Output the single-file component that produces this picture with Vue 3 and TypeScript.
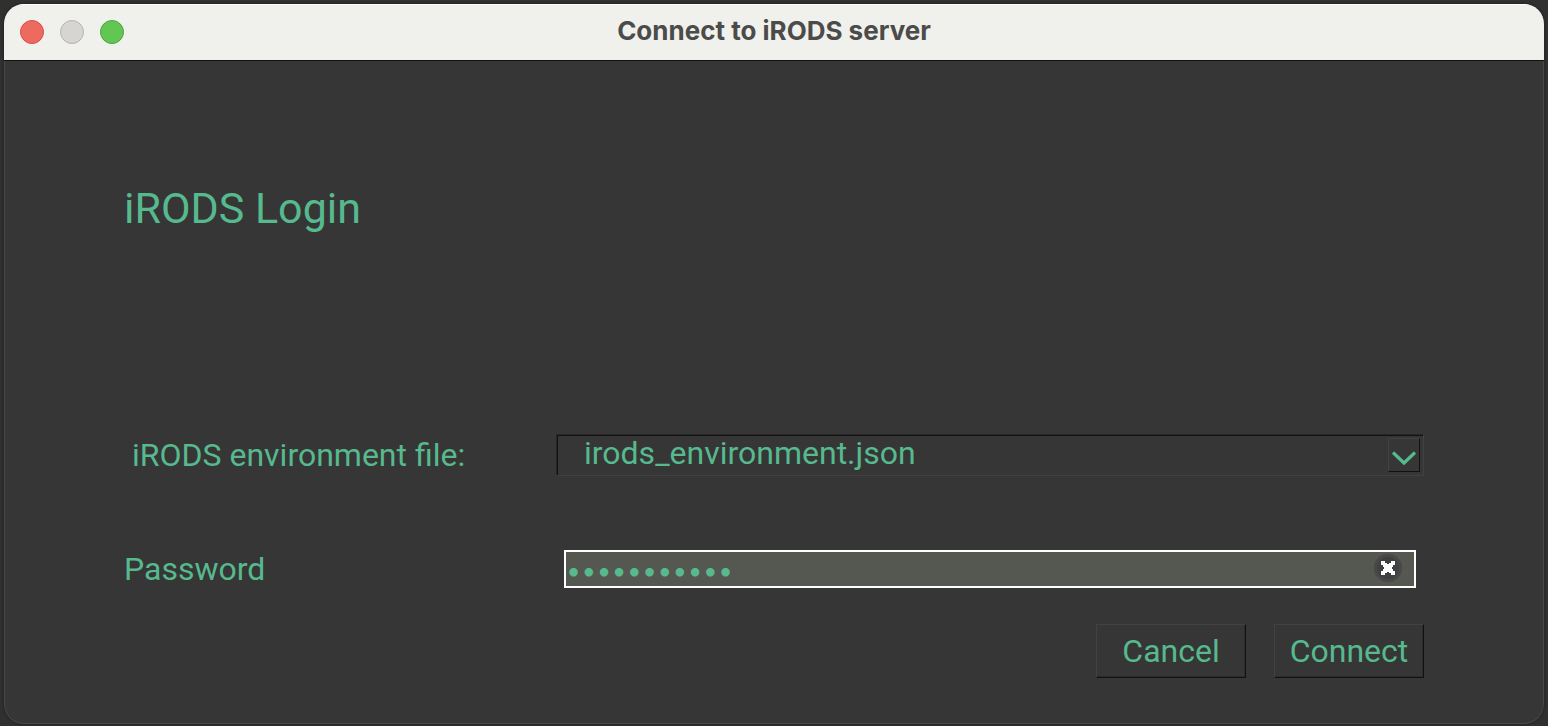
<script setup lang="ts">
import { ref } from 'vue'

const files: string[] = ['irods_environment.json']
const environment = ref(files[0])
const password = ref('irodsaccess')
</script>

<template>
  <div class="desktop">
    <section class="window">
      <header class="titlebar">
        <div class="lights">
          <button class="light close" type="button" aria-label="Close"></button>
          <button class="light minimise" type="button" aria-label="Minimise"></button>
          <button class="light zoom" type="button" aria-label="Zoom"></button>
        </div>
        <span class="caption">Connect to iRODS server</span>
      </header>
      <form class="content" @submit.prevent>
        <h1>iRODS Login</h1>
        <div class="row">
          <label class="inset" for="environment">iRODS environment file:</label>
          <div class="combo">
            <select id="environment" v-model="environment">
              <option v-for="file in files" :key="file">{{ file }}</option>
            </select>
            <span class="drop">
              <svg width="30" height="32" viewBox="0 0 30 32" fill="none">
                <path d="M4 13.500L15 24L26 13.500" stroke="#57b98e" stroke-width="3.200" />
              </svg>
            </span>
          </div>
        </div>
        <div class="row password-row">
          <label for="password">Password</label>
          <div class="secret">
            <input id="password" v-model="password" type="password" />
            <button class="clear" type="button" aria-label="Clear" @click="password = ''">
              <svg width="30" height="30" viewBox="0 0 30 30">
                <circle cx="15" cy="15" r="14" fill="#484848" />
                <circle cx="15" cy="15" r="11" fill="#404042" />
                <path d="M8 8h4v2h2v1h2v-1h2V8h4v4h-2v2h-1v2h1v2h2v4h-4v-2h-2v-1h-2v1h-2v2H8v-4h2v-2h1v-2h-1v-2H8z" fill="#fff" />
              </svg>
            </button>
          </div>
        </div>
        <div class="actions">
          <button class="action" type="button">Cancel</button>
          <button class="action" type="submit">Connect</button>
        </div>
      </form>
    </section>
  </div>
</template>

<style>
body {
  background: #303030;
}
</style>

<style scoped>
* {
  box-sizing: border-box;
}

.desktop {
  min-height: 100vh;
  padding: 4px 4px 2px;
  display: flex;
  background: #303030;
  color: #57b98e;
  font-family: Roboto, "Liberation Sans", sans-serif;
  font-size: 32px;
  line-height: 40px;
}

.window {
  flex: 1;
  display: flex;
  flex-direction: column;
  overflow: hidden;
  border-radius: 20px;
  background: #363636;
  box-shadow: 0 0 3px #1c1c1c;
}

.titlebar {
  display: grid;
  grid-template-columns: 1fr auto 1fr;
  align-items: center;
  height: 57px;
  padding: 0 16px;
  background: #f0f0ec;
  border-bottom: 1px solid #101010;
  box-shadow: inset 0 1px #fff;
}

.lights {
  display: flex;
  gap: 16px;
}

.light {
  width: 24px;
  height: 24px;
  padding: 0;
  border: 1px solid;
  border-radius: 50%;
}

.close {
  background: #ec6a5e;
  border-color: #d9503f;
}

.minimise {
  background: #d6d5d3;
  border-color: #b5b4b2;
}

.zoom {
  background: #62c655;
  border-color: #46a933;
}

.caption {
  padding-bottom: 2px;
  color: #4b4b4a;
  font-family: Inter, "Liberation Sans", sans-serif;
  font-size: 26px;
  font-weight: 700;
  line-height: 32px;
}

.content {
  flex: 1;
  padding: 119px 119px 40px;
  border: 1px solid #484848;
  border-top: 0;
  border-radius: 0 0 20px 20px;
}

h1 {
  margin: 0 0 198px;
  font-size: 43px;
  font-weight: 400;
  line-height: 56px;
}

.row {
  display: grid;
  grid-template-columns: 432px 1fr;
  align-items: center;
}

.inset {
  padding-left: 8px;
}

.combo {
  position: relative;
  height: 42px;
  border: 1px solid;
  border-color: #282828 #414141 #414141 #282828;
  box-shadow: inset 1px 1px #111;
}

select {
  display: block;
  width: 100%;
  height: 40px;
  margin-top: -2px;
  padding: 0 40px 0 27px;
  appearance: none;
  border: 0;
  outline: 0;
  background: transparent;
  color: inherit;
  font: inherit;
}

.drop {
  position: absolute;
  top: 3px;
  right: 3px;
  width: 32px;
  height: 34px;
  overflow: hidden;
  border: 1px solid;
  border-color: #424242 #111 #111 #424242;
  pointer-events: none;
}

.drop svg {
  display: block;
}

.password-row {
  margin-top: 73px;
}

.secret {
  position: relative;
  margin: 0 8px;
}

input {
  display: block;
  width: 100%;
  height: 38px;
  padding: 2px 48px 0 0;
  border: 2px solid #fff;
  border-radius: 0;
  outline: 0;
  background: #555751;
  color: inherit;
  font-family: Inter, "Liberation Sans", sans-serif;
  font-size: 27px;
}

.clear {
  position: absolute;
  top: 3px;
  right: 13px;
  width: 30px;
  height: 30px;
  padding: 0;
  border: 0;
  background: none;
}

.clear svg {
  display: block;
}

.actions {
  display: flex;
  justify-content: flex-end;
  gap: 28px;
  margin-top: 35px;
}

.action {
  width: 150px;
  height: 54px;
  padding: 0;
  border: 1px solid;
  border-color: #424242 #111 #111 #424242;
  background: #363636;
  box-shadow: inset -1px -1px #2c2c2c;
  color: inherit;
  font: inherit;
}
</style>
